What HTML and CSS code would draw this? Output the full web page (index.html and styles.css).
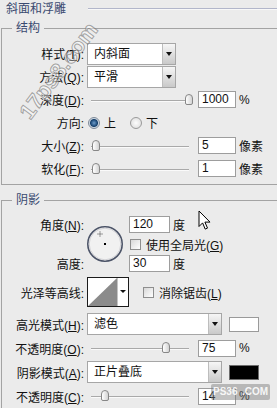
FILE: index.html
```html
<!DOCTYPE html>
<html>
<head>
  <title>斜面和浮雕</title>
  <meta charset="UTF-8">
  <link rel="stylesheet" href="styles.css">
</head>
<body>
  <div class="panel">
    <div class="title"><span>斜面和浮雕</span><i class="rule"></i></div>

    <fieldset class="group group-structure">
      <legend>结构</legend>
      <div class="row">
        <label class="lbl">样式(<u>T</u>):</label>
        <div class="select w-short"><span>内斜面</span><b class="drop"></b></div>
      </div>
      <div class="row">
        <label class="lbl">方法(<u>Q</u>):</label>
        <div class="select w-short"><span>平滑</span><b class="drop"></b></div>
      </div>
      <div class="row">
        <label class="lbl">深度(<u>D</u>):</label>
        <div class="slider"><i class="thumb" style="--v:1"></i></div>
        <div class="field">1000</div><span class="unit">%</span>
      </div>
      <div class="row">
        <label class="lbl">方向:</label>
        <span class="radio on"></span><span class="opt">上</span>
        <span class="radio second"></span><span class="opt">下</span>
      </div>
      <div class="row">
        <label class="lbl">大小(<u>Z</u>):</label>
        <div class="slider"><i class="thumb" style="--v:0"></i></div>
        <div class="field">5</div><span class="unit">像素</span>
      </div>
      <div class="row">
        <label class="lbl">软化(<u>F</u>):</label>
        <div class="slider"><i class="thumb" style="--v:0"></i></div>
        <div class="field">1</div><span class="unit">像素</span>
      </div>
    </fieldset>

    <fieldset class="group group-shade">
      <legend>阴影</legend>
      <div class="angle">
        <label class="lbl a-angle">角度(<u>N</u>):</label>
        <div class="dial">
          <svg width="38" height="38" viewBox="0 0 38 38">
            <circle cx="19" cy="19" r="17.2" fill="#f1f1f1" stroke="#4b5367" stroke-width="1.6"/>
            <circle cx="19" cy="19" r="15.8" fill="none" stroke="#d2d2d6" stroke-width="1"/>
            <path d="M14 6.5v5M11.5 9h5" stroke="#444" stroke-width="1" stroke-dasharray="1 1"/>
            <rect x="18" y="18" width="2" height="2" fill="#000"/>
          </svg>
        </div>
        <div class="cell a-val"><div class="field narrow">120</div><span class="unit">度</span></div>
        <div class="cell a-check"><span class="check"></span><span class="opt">使用全局光(<u>G</u>)</span></div>
        <label class="lbl a-height">高度:</label>
        <div class="cell a-hval"><div class="field narrow">30</div><span class="unit">度</span></div>
      </div>

      <div class="row contour-row">
        <label class="lbl">光泽等高线:</label>
        <div class="contour">
          <svg width="42" height="30" viewBox="0 0 42 30">
            <rect x="0.5" y="0.5" width="41" height="29" fill="#fff" stroke="#1b1b1b"/>
            <polygon points="1,29 30,1 30,29" fill="#8b8b8b"/>
            <line x1="30.5" y1="1" x2="30.5" y2="29" stroke="#c4c4c4"/>
            <polygon points="33,13 39,13 36,16" fill="#111"/>
          </svg>
        </div>
        <span class="check spaced"></span><span class="opt">消除锯齿(<u>L</u>)</span>
      </div>

      <div class="row">
        <label class="lbl">高光模式(<u>H</u>):</label>
        <div class="select w-long"><span>滤色</span><b class="drop"></b></div>
        <span class="swatch white"></span>
      </div>
      <div class="row">
        <label class="lbl">不透明度(<u>O</u>):</label>
        <div class="slider"><i class="thumb" style="--v:0.75"></i></div>
        <div class="field">75</div><span class="unit">%</span>
      </div>
      <div class="row">
        <label class="lbl">阴影模式(<u>A</u>):</label>
        <div class="select w-long"><span>正片叠底</span><b class="drop"></b></div>
        <span class="swatch black"></span>
      </div>
      <div class="row">
        <label class="lbl">不透明度(<u>C</u>):</label>
        <div class="slider"><i class="thumb" style="--v:0.1"></i></div>
        <div class="field">14</div><span class="unit">%</span>
      </div>
    </fieldset>

    <!-- overlays on the screenshot -->
    <svg class="cursor" width="14" height="21" viewBox="0 0 14 21">
      <path d="M1 1v15.5l3.6-3.6 2.6 6.2 2.3-1-2.6-6H12z" fill="#fff" stroke="#000" stroke-width="1"/>
    </svg>
    <div class="mark-site">17ps8.com</div>
    <div class="mark-tag"><span>PS36</span><span class="hole"></span><span>.COM</span></div>
  </div>
</body>
</html>
```

FILE: styles.css
```css
* {
  box-sizing: border-box;
}
body {
  margin: 0;
  background-color: #ebebeb;
  font-family: "Liberation Sans", "Noto Sans CJK SC", sans-serif;
  font-size: 12px;
  color: #111;
}
.panel {
  position: relative;
  width: 277px;
  height: 408px;
  overflow: hidden;
}
.title {
  display: flex;
  align-items: center;
  height: 18px;
  padding-left: 6px;
  color: #3a4a70;
  line-height: 14px;
}
.title .rule {
  flex: 1;
  margin-left: 22px;
  border-top: 1px solid #b2b6ca;
  border-bottom: 1px solid #f8f8f8;
}
.group {
  margin: 3px -20px 0 1px;
  padding: 7px 0 4px 0;
  border: 1px solid #a3a3a3;
  min-width: 0;
}
.group-shade {
  margin-top: 8px;
}
.group legend {
  margin-left: 10px;
  padding: 0 4px;
  line-height: 14px;
  color: #3a4a70;
}
.row {
  display: flex;
  align-items: center;
  height: 23px;
}
.group-shade .row {
  height: 24px;
}
.lbl {
  flex: none;
  width: 82px;
  text-align: right;
  white-space: nowrap;
}
.opt, .unit {
  white-space: nowrap;
}
.unit {
  margin-left: 3px;
}

/* drop-down */
.select {
  display: flex;
  height: 22px;
  margin-left: 3px;
  background-color: #fff;
  border: 1px solid #a6a6a6;
}
.select span {
  flex: 1;
  padding-left: 6px;
  line-height: 20px;
}
.select .drop {
  display: flex;
  align-items: center;
  justify-content: center;
  width: 13px;
  border-left: 1px solid #bdbdbd;
  background: linear-gradient(#f6f6f6, #c9c9c9);
}
.select .drop::after {
  content: "";
  border-left: 3.5px solid transparent;
  border-right: 3.5px solid transparent;
  border-top: 4px solid #111;
}
.w-short {
  width: 89px;
}
.w-long {
  width: 135px;
}

/* number box */
.field {
  flex: none;
  width: 38px;
  height: 17px;
  margin-left: 5px;
  padding-left: 3px;
  background-color: #fff;
  border: 1px solid #9d9d9d;
  line-height: 15px;
}
.field.narrow {
  width: 41px;
  margin-left: 0;
}

/* slider */
.slider {
  position: relative;
  flex: none;
  width: 101px;
  height: 12px;
  margin-left: 8px;
}
.slider::before {
  content: "";
  position: absolute;
  left: -1px;
  right: 4px;
  top: 6px;
  border-top: 1px solid #a9a9a9;
  border-bottom: 1px solid #fafafa;
}
.thumb {
  position: absolute;
  top: 0;
  left: calc((100% - 8px) * var(--v));
  width: 8px;
  height: 11px;
  border: 1px solid #878787;
  border-radius: 4px 4px 2px 2px;
  background: linear-gradient(90deg, #fff, #d3d3d3);
}

/* radio + checkbox */
.radio {
  flex: none;
  width: 12px;
  height: 12px;
  margin: 0 4px 0 4px;
  border-radius: 50%;
  border: 1px solid #9a9a9a;
  background: radial-gradient(circle, #fdfdfd, #d9d9d9);
}
.radio.on {
  border-color: #7e8a98;
  background: radial-gradient(circle, #6f9cc8 0, #2d5c8c 2.5px, #17406a 3.5px, #cbd7e3 4.5px, #f2f2f2 6px);
}
.radio.second {
  margin-left: 14px;
}
.check {
  flex: none;
  width: 11px;
  height: 11px;
  margin: 0 5px 0 1px;
  border: 1px solid #8e8e8e;
  background: linear-gradient(135deg, #d8d8d8, #fff);
}
.check.spaced {
  margin-left: 14px;
}

/* angle block */
.angle {
  display: grid;
  grid-template-columns: 82px 45px auto;
  grid-template-rows: 17px 16px 17px;
  grid-template-areas:
    "angle dial val"
    ".     dial check"
    "height dial hval";
  row-gap: 3px;
  align-items: center;
  margin-top: 2px;
}
.a-angle { grid-area: angle; }
.a-height { grid-area: height; }
.a-val { grid-area: val; }
.a-check { grid-area: check; }
.a-hval { grid-area: hval; }
.dial {
  grid-area: dial;
  display: flex;
  margin-left: 2px;
}
.cell {
  display: flex;
  align-items: center;
}

.contour-row {
  margin: 5px 0;
}
.group-shade .contour-row {
  height: 30px;
}
.contour {
  display: flex;
  margin-left: 3px;
}
.swatch {
  flex: none;
  width: 30px;
  height: 15px;
  margin-left: 7px;
  border: 1px solid #9a9a9a;
}
.swatch.white {
  background-color: #fff;
}
.swatch.black {
  background-color: #000;
  border-color: #6d6d6d;
}

/* overlays */
.cursor {
  position: absolute;
  left: 198px;
  top: 210px;
}
.mark-site {
  position: absolute;
  left: 2px;
  top: 58px;
  font-size: 22px;
  font-weight: bold;
  line-height: 26px;
  color: rgba(255, 255, 255, 0.45);
  -webkit-text-stroke: 1px rgba(110, 110, 110, 0.6);
  transform: rotate(-53deg);
}
.mark-tag {
  position: absolute;
  left: 211px;
  top: 384px;
  display: flex;
  width: 59px;
  height: 16px;
  padding: 0 2px;
  border-radius: 2px;
  background-color: rgba(120, 120, 120, 0.45);
  color: rgba(255, 255, 255, 0.9);
  font-size: 10px;
  font-weight: bold;
  line-height: 16px;
  white-space: nowrap;
}
.mark-tag .hole {
  width: 7px;
}
```
